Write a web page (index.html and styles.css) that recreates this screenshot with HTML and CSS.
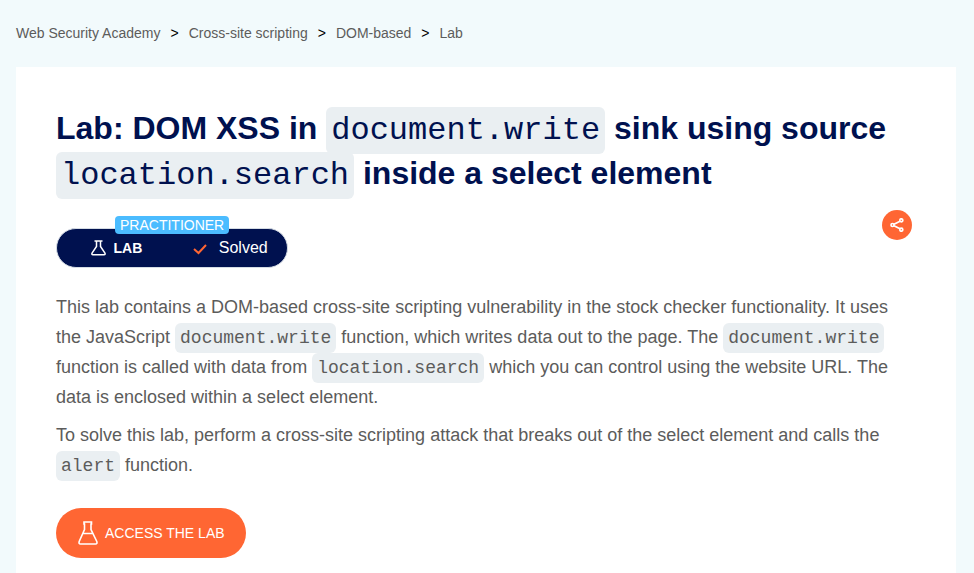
FILE: index.html
```html
<!DOCTYPE html>
<html lang="en">
<head>
<meta charset="utf-8">
<title>Lab: DOM XSS</title>
<link rel="stylesheet" href="styles.css">
</head>
<body>
<nav class="crumbs"><a>Web Security Academy</a><a>Cross-site scripting</a><a>DOM-based</a><a>Lab</a></nav>
<main class="card">
<h1>Lab: DOM XSS in <code>document.write</code> sink using source <code>location.search</code> inside a select element</h1>
<div class="meta">
<div class="status">
<span class="level">PRACTITIONER</span>
<svg class="flask" viewBox="0 0 15 16"><path d="M3.500 1h8M5.500 1v5.500L1.200 12.800Q.2 14.700 2 14.700h11q1.800 0 .8-1.900L9.500 6.500V1"/></svg>
<b>LAB</b>
<svg class="check" viewBox="0 0 14 12"><path d="M1 6l4.500 4L13 2"/></svg>
<span class="solved">Solved</span>
</div>
<span class="share"><svg viewBox="0 0 14 14"><path d="M4 6.200l6-3M4 7.800l6 3"/><circle cx="2.500" cy="7" r="1.500"/><circle cx="11.300" cy="2.300" r="1.500"/><circle cx="11.300" cy="11.700" r="1.500"/></svg></span>
</div>
<p>This lab contains a DOM-based cross-site scripting vulnerability in the stock checker functionality. It uses the JavaScript <code>document.write</code> function, which writes data out to the page. The <code>document.write</code> function is called with data from <code>location.search</code> which you can control using the website URL. The data is enclosed within a select element.</p>
<p>To solve this lab, perform a cross-site scripting attack that breaks out of the select element and calls the <code>alert</code> function.</p>
<a class="access"><svg class="flask" viewBox="0 0 20 24"><path d="M6 1h7.500v2H13v5.500l5.800 12q.7 2.500-1.300 2.500h-15q-2 0-1.300-2.500L6.500 8.500V3H6zM4.500 12.500h10.500"/></svg>ACCESS THE LAB</a>
</main>
</body>
</html>
```
FILE: styles.css
```css
* { box-sizing: border-box; }
body { margin: 0; height: 573px; overflow: hidden; background: #f2fafc; font-family: "Liberation Sans", Arial, sans-serif; color: #5c5c5b; }
svg { fill: none; stroke: currentColor; }
.crumbs { height: 67px; padding: 0 16px 2px; display: flex; align-items: center; font-size: 14px; }
.crumbs a + a::before { content: ">"; color: #000; margin: 0 10px; }
.card { width: 940px; height: 506px; margin-left: 16px; padding: 39px 40px 0; background: #fff; }
h1 { margin: 0; font-size: 32px; line-height: 45px; color: #00114f; }
code { font-family: "Liberation Mono", monospace; font-weight: 400; line-height: 1; background: #eaeff2; border-radius: 6px; padding: 5px; }
.meta { display: flex; justify-content: space-between; align-items: flex-start; height: 96px; padding-top: 14px; }
.status { position: relative; display: flex; align-items: center; width: 232px; height: 40px; margin-top: 18px; padding-left: 34px; border: 1px solid #d5dce4; border-radius: 20px; background: #00114f; color: #fff; font-size: 14px; }
.level { position: absolute; left: 58px; top: -13px; height: 18px; padding: 0 5px; line-height: 18px; border-radius: 4px; background: #4bbcff; }
.status .flask { width: 15px; height: 16px; stroke-width: 1.500; margin-right: 7.500px; }
.check { width: 14px; height: 12px; color: #ff6633; stroke-width: 2; margin: 1px 0 0 50.500px; }
.solved { font-size: 16px; margin-left: 12px; }
.share { width: 30px; height: 30px; margin-right: 4px; border-radius: 50%; background: #ff6633; color: #fff; display: grid; place-items: center; }
.share svg { width: 14px; height: 14px; stroke-width: 1.700; }
p { margin: 0 0 8px; font-size: 18px; line-height: 30px; }
.access { display: flex; align-items: center; width: 190px; height: 50px; margin-top: 28px; padding-left: 22px; border-radius: 25px; background: #ff6633; color: #fff; font-size: 14px; }
.access .flask { width: 20px; height: 24px; stroke-width: 1.600; margin-right: 7px; }
```
